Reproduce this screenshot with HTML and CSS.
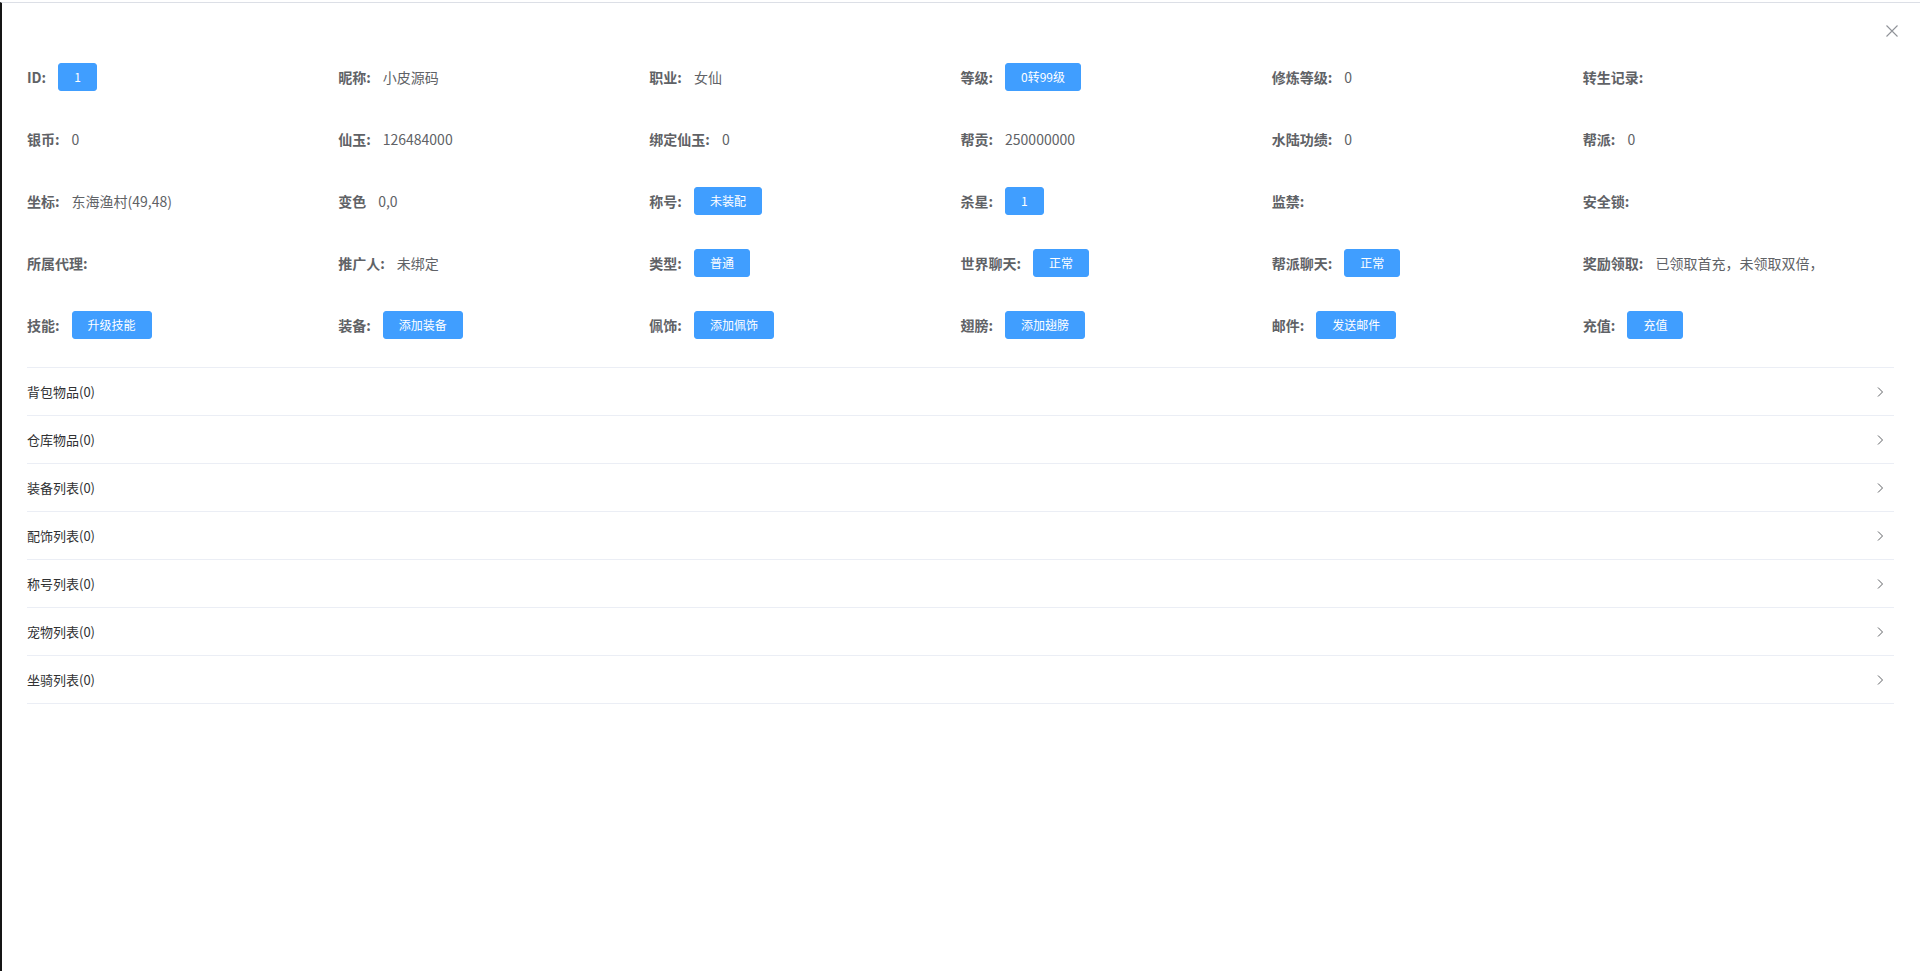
FILE: index.html
```html
<!DOCTYPE html>
<html lang="zh-CN">
<head>
<meta charset="utf-8">
<title>玩家详情</title>
<link rel="stylesheet" href="styles.css">
</head>
<body>
<div class="dialog">
  <div class="dialog-header">
    <button class="close-btn" aria-label="关闭">
      <svg width="16" height="16" viewBox="0 0 16 16"><path d="M2.5 2.5 L13.5 13.5 M13.5 2.5 L2.5 13.5" stroke="#909399" stroke-width="1.1" fill="none"/></svg>
    </button>
  </div>
  <div class="dialog-body">
    <div class="form">
      <div class="row">
        <div class="item"><span class="label">ID:</span><button class="btn">1</button></div>
        <div class="item"><span class="label">昵称:</span><span class="value">小皮源码</span></div>
        <div class="item"><span class="label">职业:</span><span class="value">女仙</span></div>
        <div class="item"><span class="label">等级:</span><button class="btn">0转99级</button></div>
        <div class="item"><span class="label">修炼等级:</span><span class="value">0</span></div>
        <div class="item"><span class="label">转生记录:</span></div>
      </div>
      <div class="row">
        <div class="item"><span class="label">银币:</span><span class="value">0</span></div>
        <div class="item"><span class="label">仙玉:</span><span class="value">126484000</span></div>
        <div class="item"><span class="label">绑定仙玉:</span><span class="value">0</span></div>
        <div class="item"><span class="label">帮贡:</span><span class="value">250000000</span></div>
        <div class="item"><span class="label">水陆功绩:</span><span class="value">0</span></div>
        <div class="item"><span class="label">帮派:</span><span class="value">0</span></div>
      </div>
      <div class="row">
        <div class="item"><span class="label">坐标:</span><span class="value">东海渔村(49,48)</span></div>
        <div class="item"><span class="label">变色</span><span class="value">0,0</span></div>
        <div class="item"><span class="label">称号:</span><button class="btn">未装配</button></div>
        <div class="item"><span class="label">杀星:</span><button class="btn">1</button></div>
        <div class="item"><span class="label">监禁:</span></div>
        <div class="item"><span class="label">安全锁:</span></div>
      </div>
      <div class="row">
        <div class="item"><span class="label">所属代理:</span></div>
        <div class="item"><span class="label">推广人:</span><span class="value">未绑定</span></div>
        <div class="item"><span class="label">类型:</span><button class="btn">普通</button></div>
        <div class="item"><span class="label">世界聊天:</span><button class="btn">正常</button></div>
        <div class="item"><span class="label">帮派聊天:</span><button class="btn">正常</button></div>
        <div class="item"><span class="label">奖励领取:</span><span class="value">已领取首充，未领取双倍，</span></div>
      </div>
      <div class="row">
        <div class="item"><span class="label">技能:</span><button class="btn">升级技能</button></div>
        <div class="item"><span class="label">装备:</span><button class="btn">添加装备</button></div>
        <div class="item"><span class="label">佩饰:</span><button class="btn">添加佩饰</button></div>
        <div class="item"><span class="label">翅膀:</span><button class="btn">添加翅膀</button></div>
        <div class="item"><span class="label">邮件:</span><button class="btn">发送邮件</button></div>
        <div class="item"><span class="label">充值:</span><button class="btn">充值</button></div>
      </div>
    </div>
    <div class="collapse">
      <div class="collapse-item"><span>背包物品(0)</span><svg class="arrow" width="12" height="12" viewBox="0 0 12 12"><path d="M4 1.5 L8.5 6 L4 10.5" stroke="#606266" stroke-width="1" fill="none"/></svg></div>
      <div class="collapse-item"><span>仓库物品(0)</span><svg class="arrow" width="12" height="12" viewBox="0 0 12 12"><path d="M4 1.5 L8.5 6 L4 10.5" stroke="#606266" stroke-width="1" fill="none"/></svg></div>
      <div class="collapse-item"><span>装备列表(0)</span><svg class="arrow" width="12" height="12" viewBox="0 0 12 12"><path d="M4 1.5 L8.5 6 L4 10.5" stroke="#606266" stroke-width="1" fill="none"/></svg></div>
      <div class="collapse-item"><span>配饰列表(0)</span><svg class="arrow" width="12" height="12" viewBox="0 0 12 12"><path d="M4 1.5 L8.5 6 L4 10.5" stroke="#606266" stroke-width="1" fill="none"/></svg></div>
      <div class="collapse-item"><span>称号列表(0)</span><svg class="arrow" width="12" height="12" viewBox="0 0 12 12"><path d="M4 1.5 L8.5 6 L4 10.5" stroke="#606266" stroke-width="1" fill="none"/></svg></div>
      <div class="collapse-item"><span>宠物列表(0)</span><svg class="arrow" width="12" height="12" viewBox="0 0 12 12"><path d="M4 1.5 L8.5 6 L4 10.5" stroke="#606266" stroke-width="1" fill="none"/></svg></div>
      <div class="collapse-item"><span>坐骑列表(0)</span><svg class="arrow" width="12" height="12" viewBox="0 0 12 12"><path d="M4 1.5 L8.5 6 L4 10.5" stroke="#606266" stroke-width="1" fill="none"/></svg></div>
    </div>
  </div>
</div>
</body>
</html>
```

FILE: styles.css
```css
html, body {
  margin: 0;
  padding: 0;
  background: #fff;
}
body {
  font-family: "Noto Sans CJK SC", "Noto Sans", sans-serif;
  font-size: 14px;
  color: #606266;
}
.dialog {
  margin-top: 2px;
  border-top: 1px solid #dcdfe6;
  border-left: 2px solid #151515;
  min-height: calc(100vh - 3px);
  box-sizing: border-box;
  background: #fff;
}
.dialog-header {
  height: 54px;
  box-sizing: border-box;
  padding: 20px 20px 0;
  display: flex;
  justify-content: flex-end;
  align-items: flex-start;
}
.close-btn {
  border: 0;
  background: none;
  padding: 0;
  width: 16px;
  height: 16px;
  display: block;
  cursor: pointer;
  margin-top: 0;
}
.close-btn svg {
  display: block;
}
.dialog-body {
  padding: 0 26px 0 25px;
}
.row {
  display: grid;
  grid-template-columns: repeat(6, 1fr);
}
.item {
  height: 40px;
  line-height: 40px;
  margin-bottom: 22px;
  display: flex;
  align-items: center;
  white-space: nowrap;
}
.label {
  font-weight: 700;
  color: #606266;
  padding-right: 12px;
}
.value {
  color: #606266;
}
.btn {
  font-family: inherit;
  font-size: 12px;
  line-height: 12px;
  height: 28px;
  box-sizing: border-box;
  padding: 7px 15px;
  border: 1px solid #409eff;
  background: #409eff;
  color: #fff;
  border-radius: 3px;
  cursor: pointer;
}
.collapse {
  border-top: 1px solid #ebeef5;
}
.collapse-item {
  height: 48px;
  box-sizing: border-box;
  border-bottom: 1px solid #ebeef5;
  display: flex;
  align-items: center;
  justify-content: space-between;
  font-size: 13px;
  color: #303133;
  font-weight: 400;
}
.arrow {
  display: block;
  margin-right: 8px;
}
```
